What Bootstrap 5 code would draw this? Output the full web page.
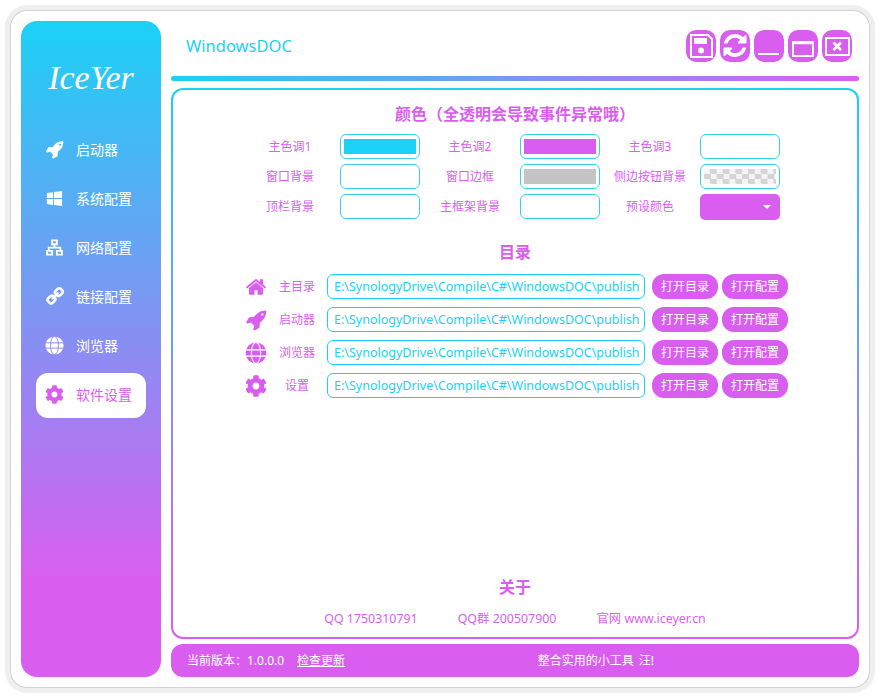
<!doctype html>
<html lang="zh-CN">
<head>
  <meta charset="utf-8">
  <meta name="viewport" content="width=device-width, initial-scale=1">
  <title>WindowsDOC</title>
  <link href="https://cdn.jsdelivr.net/npm/bootstrap@5.3.3/dist/css/bootstrap.min.css" rel="stylesheet">
  <style>
    :root { --cy: #1bd1f5; --pu: #d95ef0; }
    body {
      background: #fff;
      font-family: "Noto Sans", "Noto Sans CJK SC", sans-serif;
      font-size: 12px;
      margin: 0;
      width: 880px;
      height: 698px;
      overflow: hidden;
    }
    /* Window */
    .app-window {
      width: 858px;
      height: 676px;
      margin: 11px;
      padding: 10px;
      gap: 10px;
      background: #fff;
      border-radius: 16px;
      box-shadow: 0 0 0 1px #d2d2d2, 0 0 0 6px #efefef;
    }
    /* Sidebar */
    .side-bar {
      width: 140px;
      flex: none;
      border-radius: 16px;
      background: linear-gradient(180deg, var(--cy) 0%, var(--pu) 85%);
      padding: 0 15px;
    }
    .brand {
      height: 107px;
      padding-top: 7px;
      font-family: "Liberation Serif", serif;
      font-style: italic;
      font-size: 34px;
      color: #fff;
      line-height: 1;
    }
    .side-item {
      height: 45px;
      padding: 0 0 2px 9px;
      gap: 12px;
      border-radius: 12px;
      color: #fff;
      font-size: 14px;
      text-decoration: none;
    }
    .side-item svg { width: 19px; height: 19px; flex: none; fill: currentColor; }
    .side-item.on { background: #fff; color: var(--pu); }
    /* Header */
    .top-row { height: 55px; padding: 0 7px 5px 15px; }
    .app-title { font-size: 16.5px; color: var(--cy); }
    .win-btn {
      width: 30px;
      height: 32px;
      padding: 0;
      border: 0;
      border-radius: 10px;
      background: var(--pu);
    }
    .win-btn svg { display: block; width: 30px; height: 32px; }
    .top-line {
      height: 5px;
      border-radius: 3px;
      background: linear-gradient(90deg, var(--cy), var(--pu));
    }
    /* Main panel */
    .main-panel {
      height: 551px;
      margin-top: 7px;
      border: 2px solid transparent;
      border-radius: 12px;
      background: linear-gradient(#fff, #fff) padding-box, linear-gradient(180deg, var(--cy), var(--pu)) border-box;
      color: var(--pu);
    }
    .sect-title { font-size: 16px; font-weight: 700; line-height: 22px; text-align: center; }
    .color-grid {
      display: grid;
      grid-template-columns: 100px 80px 100px 80px 100px 80px;
      grid-auto-rows: 25px;
      row-gap: 5px;
      margin-left: 67px;
      margin-top: 9px;
      align-items: center;
      text-align: center;
    }
    .swatch {
      height: 25px;
      padding: 4px 3px;
      border: 1px solid #38cfee;
      border-radius: 6px;
      background: #fff;
    }
    .swatch span { display: block; height: 100%; }
    .fill-cy { background: var(--cy); }
    .fill-pu { background: var(--pu); }
    .fill-gray { background: #c4c4c4; }
    .fill-check { background: repeating-conic-gradient(#d4d4d4 0 25%, #f4f4f4 0 50%) 0 0 / 12.7px 10px; }
    .preset-box {
      height: 26px;
      margin-top: 1px;
      border-radius: 5px;
      background: var(--pu);
      padding-right: 9px;
    }
    .caret-down {
      width: 0;
      height: 0;
      border-left: 4px solid transparent;
      border-right: 4px solid transparent;
      border-top: 4px solid #fff;
    }
    .dir-rows { margin-left: 72px; margin-top: 11px; gap: 8px; }
    .dir-icon { width: 22px; height: 22px; fill: var(--pu); flex: none; }
    .dir-label { width: 60px; flex: none; text-align: center; }
    .dir-input.form-control {
      width: 318px;
      height: 25px;
      min-height: 0;
      padding: 0 5px 0 6px;
      border: 1px solid var(--cy);
      border-radius: 6px;
      color: var(--cy);
      font-size: 12.5px;
      box-shadow: none;
    }
    .dir-btn.btn {
      width: 66px;
      height: 25px;
      padding: 0;
      border: 0;
      border-radius: 12px;
      background: var(--pu);
      color: #fff;
      font-size: 12px;
    }
    .about-links { gap: 40px; font-size: 12.4px; padding-bottom: 8px; }
    /* Footer */
    .foot-bar {
      height: 33px;
      margin-top: 5px;
      padding-left: 16px;
      border-radius: 12px;
      background: var(--pu);
      color: #fff;
    }
    .foot-bar u { margin-left: 13px; text-underline-offset: 1px; }
    .foot-msg { margin-left: auto; margin-right: 205px; word-spacing: 2px; }
  </style>
</head>
<body>
  <svg width="0" height="0" class="position-absolute">
    <defs>
      <symbol id="i-rocket" viewBox="0 0 1792 1792">
        <path d="M1504 448q0-40-28-68t-68-28-68 28-28 68 28 68 68 28 68-28 28-68zm224-288q0 249-75.500 430.500t-253.500 360.500q-81 80-195 176l-20 379q-2 16-16 26l-384 224q-7 4-16 4-12 0-23-9l-64-64q-13-14-8-32l85-276-281-281-276 85q-3 1-9 1-14 0-23-9l-64-64q-17-19-5-39l224-384q10-14 26-16l379-20q96-114 176-195 188-187 358-258t431-71q14 0 24 9.500t10 22.500z"/>
      </symbol>
      <symbol id="i-win" viewBox="0 0 20 20">
        <path d="M2 4.200l6.600-.9v6.200H2zM9.500 3.200L18 2v7.500H9.500zM2 10.500h6.600v6.300L2 15.900zM9.500 10.500H18V18l-8.500-1.200z"/>
      </symbol>
      <symbol id="i-net" viewBox="0 0 20 20">
        <path fill-rule="evenodd" d="M6.500 1.500h7v6h-2.600v1.800H17v3.200h1.800V18.500h-7.300v-6h3.700v-1.400H4.800v1.400h3.700v6H1.200v-6H3V9.300h6.100V7.500H6.500zM8.500 3.400v2.200h3V3.400zM3.200 14.400v2.200h3.300v-2.200zm10.300 0v2.200h3.300v-2.200z"/>
      </symbol>
      <symbol id="i-link" viewBox="0 0 1792 1792">
        <path stroke="currentColor" stroke-width="70" transform="translate(1792 0) scale(-1 1)" d="M1456 1216q0-40-28-68l-208-208q-28-28-68-28-42 0-72 32 3 3 19 18.500t21.500 21.500 15 19 13 25.500 3.500 27.500q0 40-28 68t-68 28q-15 0-27.500-3.500t-25.500-13-19-15-21.500-21.500-18.500-19q-33 31-33 73 0 40 28 68l206 207q27 27 68 27 40 0 68-26l147-146q28-28 28-67zm-703-705q0-40-28-68l-206-207q-28-28-68-28-39 0-68 27l-147 146q-28 28-28 67 0 40 28 68l208 208q27 27 68 27 42 0 72-31-3-3-19-18.500t-21.500-21.500-15-19-13-25.500-3.500-27.500q0-40 28-68t68-28q15 0 27.500 3.500t25.500 13 19 15 21.500 21.500 18.500 19q33-31 33-73zm895 705q0 120-85 203l-147 146q-83 83-203 83-121 0-204-85l-206-207q-83-83-83-203 0-123 88-209l-88-88q-86 88-208 88-120 0-204-84l-208-208q-84-84-84-204t85-203l147-146q83-83 203-83 121 0 204 85l206 207q83 83 83 203 0 123-88 209l88 88q86-88 208-88 120 0 204 84l208 208q84 84 84 204z"/>
      </symbol>
      <mask id="globe-lines">
        <rect width="20" height="20" fill="#fff"/>
        <g fill="none" stroke="#000" stroke-width="1">
          <path d="M1 7.200h18M1 12.800h18"/>
          <ellipse cx="10" cy="10" rx="4.200" ry="9.500"/>
        </g>
      </mask>
      <symbol id="i-globe" viewBox="0 0 20 20">
        <circle cx="10" cy="10" r="9.500" mask="url(#globe-lines)"/>
      </symbol>
      <symbol id="i-gear" viewBox="0 0 512 512">
        <path d="M487.400 315.700l-42.600-24.600c4.300-23.200 4.300-47 0-70.200l42.600-24.600c4.900-2.800 7.100-8.600 5.500-14-11.100-35.600-30-67.800-54.700-94.600-3.800-4.100-10-5.100-14.800-2.300L380.800 110c-17.900-15.400-38.500-27.300-60.800-35.100V25.800c0-5.600-3.900-10.500-9.400-11.700-36.700-8.200-74.300-7.800-109.200 0-5.500 1.200-9.400 6.100-9.400 11.700V75c-22.200 7.900-42.800 19.800-60.800 35.100L88.700 85.500c-4.900-2.800-11-1.900-14.800 2.300-24.700 26.700-43.600 58.900-54.700 94.600-1.700 5.400.6 11.200 5.500 14L67.300 221c-4.300 23.200-4.300 47 0 70.200l-42.600 24.600c-4.900 2.800-7.100 8.600-5.500 14 11.100 35.600 30 67.800 54.700 94.600 3.800 4.100 10 5.100 14.800 2.300l42.600-24.600c17.900 15.400 38.500 27.300 60.800 35.100v49.200c0 5.600 3.900 10.500 9.400 11.700 36.700 8.200 74.300 7.800 109.200 0 5.500-1.200 9.400-6.100 9.400-11.700v-49.200c22.200-7.900 42.800-19.800 60.800-35.100l42.600 24.600c4.900 2.800 11 1.900 14.800-2.300 24.700-26.700 43.600-58.900 54.700-94.600 1.500-5.500-.7-11.300-5.600-14.100zM256 336c-44.100 0-80-35.900-80-80s35.900-80 80-80 80 35.900 80 80-35.900 80-80 80z"/>
      </symbol>
      <symbol id="i-home" viewBox="0 0 1792 1792">
        <path d="M1472 992v480q0 26-19 45t-45 19h-384v-384h-256v384h-384q-26 0-45-19t-19-45v-480q0-1 .5-3t.5-3l575-474 575 474q1 2 1 6zm223-69l-62 74q-8 9-21 11h-3q-13 0-21-7l-692-577-692 577q-12 8-24 7-13-2-21-11l-62-74q-8-10-7-23.500t11-21.500l719-599q32-26 76-26t76 26l244 204v-195q0-14 9-23t23-9h192q14 0 23 9t9 23v408l219 182q10 8 11 21.500t-7 23.500z"/>
      </symbol>
    </defs>
  </svg>

  <div class="app-window d-flex">
    <!-- Sidebar -->
    <aside class="side-bar d-flex flex-column">
      <div class="brand d-flex align-items-center justify-content-center">IceYer</div>
      <div class="d-flex flex-column" style="gap:4px">
        <a class="side-item d-flex align-items-center" href="#"><svg><use href="#i-rocket"/></svg>启动器</a>
        <a class="side-item d-flex align-items-center" href="#"><svg><use href="#i-win"/></svg>系统配置</a>
        <a class="side-item d-flex align-items-center" href="#"><svg><use href="#i-net"/></svg>网络配置</a>
        <a class="side-item d-flex align-items-center" href="#"><svg><use href="#i-link"/></svg>链接配置</a>
        <a class="side-item d-flex align-items-center" href="#"><svg><use href="#i-globe"/></svg>浏览器</a>
        <a class="side-item on d-flex align-items-center" href="#"><svg><use href="#i-gear"/></svg>软件设置</a>
      </div>
    </aside>

    <div class="flex-grow-1 d-flex flex-column" style="min-width:0">
      <!-- Header -->
      <div class="top-row d-flex align-items-center justify-content-between">
        <div class="app-title">WindowsDOC</div>
        <div class="d-flex" style="gap:4px">
          <button class="win-btn"><svg viewBox="0 0 30 32" fill="none" stroke="#fff" stroke-width="2"><path d="M5 5h17l4 4v18H5z"/><path d="M8 8h13v6H8z" fill="#fff" stroke="none"/><circle cx="15" cy="20.500" r="3" fill="#fff" stroke="none"/></svg></button>
          <button class="win-btn"><svg viewBox="-104 -137 2000 2133" fill="#fff"><path d="M1639 1056q0 5-1 7-64 268-268 434.500t-478 166.500q-146 0-282.500-55t-243.500-157l-129 129q-19 19-45 19t-45-19-19-45v-448q0-26 19-45t45-19h448q26 0 45 19t19 45-19 45l-137 137q71 66 161 102t187 36q134 0 250-65t186-179q11-17 53-117 8-23 30-23h192q13 0 22.500 9.500t9.500 22.500zm25-800v448q0 26-19 45t-45 19h-448q-26 0-45-19t-19-45 19-45l138-138q-148-137-349-137-134 0-250 65t-186 179q-11 17-53 117-8 23-30 23h-199q-13 0-22.500-9.500t-9.500-22.500v-7q65-268 270-434.500t480-166.500q146 0 284 55.500t245 156.500l130-129q19-19 45-19t45 19 19 45z"/></svg></button>
          <button class="win-btn"><svg viewBox="0 0 30 32"><rect x="4" y="23" width="21" height="2" fill="#fff"/></svg></button>
          <button class="win-btn"><svg viewBox="0 0 30 32" fill="none" stroke="#fff" stroke-width="2"><rect x="5" y="12" width="20" height="14"/><path d="M5 13h20" stroke-width="2.500"/></svg></button>
          <button class="win-btn"><svg viewBox="0 0 30 32" fill="none" stroke="#fff" stroke-width="2"><rect x="4" y="8" width="23" height="17"/><path d="M11.500 12.500l7.500 7.500m0-7.500l-7.500 7.500" stroke-width="2.600"/></svg></button>
        </div>
      </div>
      <div class="top-line"></div>

      <!-- Main panel -->
      <main class="main-panel d-flex flex-column">
        <div class="sect-title" style="margin-top:13px">颜色&#xFF08;全透明会导致事件异常哦&#xFF09;</div>
        <div class="color-grid">
          <div>主色调1</div><div class="swatch"><span class="fill-cy"></span></div>
          <div>主色调2</div><div class="swatch"><span class="fill-pu"></span></div>
          <div>主色调3</div><div class="swatch"></div>
          <div>窗口背景</div><div class="swatch"></div>
          <div>窗口边框</div><div class="swatch"><span class="fill-gray"></span></div>
          <div>侧边按钮背景</div><div class="swatch"><span class="fill-check"></span></div>
          <div>顶栏背景</div><div class="swatch"></div>
          <div>主框架背景</div><div class="swatch"></div>
          <div>预设颜色</div><div class="preset-box d-flex align-items-center justify-content-end"><span class="caret-down"></span></div>
        </div>

        <div class="sect-title" style="margin-top:22px">目录</div>
        <div class="dir-rows d-flex flex-column">
          <div class="d-flex align-items-center"><svg class="dir-icon"><use href="#i-home"/></svg><span class="dir-label">主目录</span><input class="dir-input form-control" readonly value="E:\SynologyDrive\Compile\C#\WindowsDOC\publish\WindowsDOC"><button class="dir-btn btn" style="margin:0 4px 0 7px">打开目录</button><button class="dir-btn btn">打开配置</button></div>
          <div class="d-flex align-items-center"><svg class="dir-icon"><use href="#i-rocket"/></svg><span class="dir-label">启动器</span><input class="dir-input form-control" readonly value="E:\SynologyDrive\Compile\C#\WindowsDOC\publish\WindowsDOC"><button class="dir-btn btn" style="margin:0 4px 0 7px">打开目录</button><button class="dir-btn btn">打开配置</button></div>
          <div class="d-flex align-items-center"><svg class="dir-icon"><use href="#i-globe"/></svg><span class="dir-label">浏览器</span><input class="dir-input form-control" readonly value="E:\SynologyDrive\Compile\C#\WindowsDOC\publish\WindowsDOC"><button class="dir-btn btn" style="margin:0 4px 0 7px">打开目录</button><button class="dir-btn btn">打开配置</button></div>
          <div class="d-flex align-items-center"><svg class="dir-icon"><use href="#i-gear"/></svg><span class="dir-label">设置</span><input class="dir-input form-control" readonly value="E:\SynologyDrive\Compile\C#\WindowsDOC\publish\WindowsDOC"><button class="dir-btn btn" style="margin:0 4px 0 7px">打开目录</button><button class="dir-btn btn">打开配置</button></div>
        </div>

        <div class="mt-auto">
          <div class="sect-title" style="margin-bottom:12px">关于</div>
          <div class="about-links d-flex justify-content-center"><span>QQ 1750310791</span><span>QQ群 200507900</span><span>官网 www.iceyer.cn</span></div>
        </div>
      </main>

      <!-- Footer -->
      <footer class="foot-bar d-flex align-items-center">
        <span>当前版本&#xFF1A;1.0.0.0</span><u>检查更新</u>
        <span class="foot-msg">整合实用的小工具 汪!</span>
      </footer>
    </div>
  </div>

  <script src="https://cdn.jsdelivr.net/npm/bootstrap@5.3.3/dist/js/bootstrap.bundle.min.js"></script>
</body>
</html>
